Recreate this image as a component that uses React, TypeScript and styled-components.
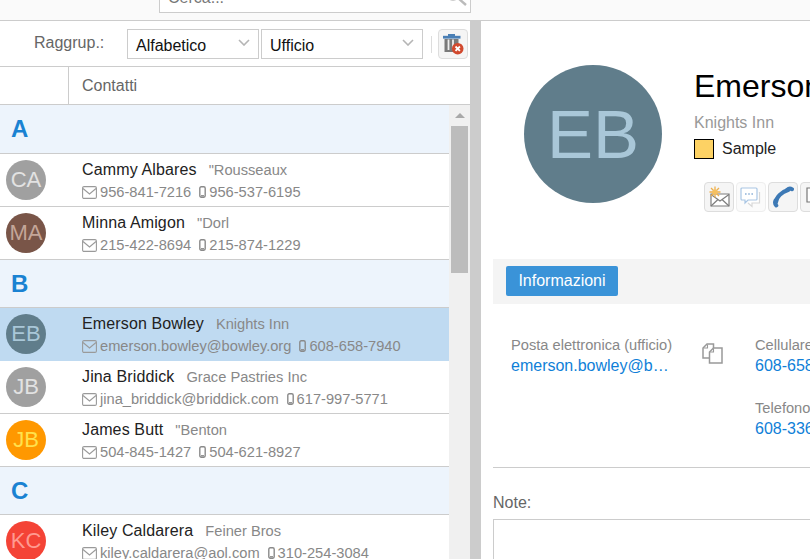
import React from "react";
import styled, { createGlobalStyle } from "styled-components";

const GlobalStyle = createGlobalStyle`
  html, body {
    margin: 0;
    height: 100%;
    overflow: hidden;
    background: #fff;
    font-family: "Liberation Sans", Arial, sans-serif;
  }
  * { box-sizing: border-box; }
`;

const Page = styled.div`
  width: 810px;
  height: 559px;
  display: flex;
  flex-direction: column;
  overflow: hidden;
`;

const TopBar = styled.div`
  height: 21px;
  flex: none;
  display: flex;
  align-items: flex-end;
  padding: 0 0 7px 159px;
  background: #fafafa;
  border-bottom: 1px solid #ccc;
  overflow: hidden;
`;

const SearchBox = styled.div`
  width: 312px;
  height: 30px;
  flex: none;
  display: flex;
  align-items: center;
  justify-content: space-between;
  padding: 0 1px 0 8px;
  background: #fff;
  border: 1px solid #ccc;
  color: #777;
  font-size: 16px;
`;

const Main = styled.div`
  flex: 1;
  min-height: 0;
  display: flex;
`;

const LeftPane = styled.div`
  width: 470px;
  flex: none;
  display: flex;
  flex-direction: column;
`;

const Splitter = styled.div`
  width: 11px;
  flex: none;
  background: #ccc;
`;

const Toolbar = styled.div`
  height: 46px;
  flex: none;
  display: flex;
  align-items: center;
  padding: 1px 2px 0 34px;
  border-bottom: 1px solid #ccc;
`;

const GroupLabel = styled.span`
  width: 93px;
  flex: none;
  color: #666;
  font-size: 16px;
  margin-top: -2px;
`;

const Select = styled.div<{ $width: number }>`
  width: ${(p) => p.$width}px;
  height: 30px;
  flex: none;
  display: flex;
  align-items: center;
  justify-content: space-between;
  margin-right: 2px;
  padding: 3px 8px 0 8px;
  border: 1px solid #ccc;
  color: #111;
  font-size: 16px;
`;

const Separator = styled.div`
  width: 1px;
  height: 17px;
  flex: none;
  margin: 0 6px;
  background: #ddd;
`;

const IconButton = styled.button<{ $faded?: boolean }>`
  width: 30px;
  height: 30px;
  flex: none;
  display: flex;
  align-items: center;
  justify-content: center;
  padding: 0;
  background: ${(p) => (p.$faded ? "#fbfbfb" : "#f5f5f5")};
  border: 1px solid ${(p) => (p.$faded ? "#eee" : "#ddd")};
  border-radius: 4px;
`;

const ColumnHeader = styled.div`
  height: 38px;
  flex: none;
  display: flex;
  border-bottom: 1px solid #ccc;
  color: #666;
  font-size: 16px;
`;

const HeaderSpacer = styled.div`
  width: 69px;
  flex: none;
  border-right: 1px solid #ccc;
`;

const HeaderTitle = styled.div`
  padding: 10px 0 0 13px;
`;

const ListArea = styled.div`
  flex: 1;
  min-height: 0;
  display: flex;
`;

const List = styled.div`
  flex: 1;
  min-width: 0;
  overflow: hidden;
`;

const Scrollbar = styled.div`
  width: 21px;
  flex: none;
  padding: 0 2px;
  background: #f0f0f0;
`;

const ScrollArrow = styled.div`
  width: 17px;
  height: 21px;
  display: flex;
  align-items: center;
  justify-content: center;

  &::before {
    content: "";
    border-left: 5px solid transparent;
    border-right: 5px solid transparent;
    border-bottom: 5px solid #a8a8a8;
  }
`;

const ScrollThumb = styled.div`
  width: 17px;
  height: 147px;
  background: #bcbcbc;
`;

const SectionHeader = styled.div<{ $tall?: boolean }>`
  height: ${(p) => (p.$tall ? 49 : 48)}px;
  display: flex;
  align-items: center;
  padding-left: 11px;
  background: #edf4fc;
  border-bottom: 1px solid #ccc;
  color: #1a82d2;
  font-size: 24px;
  font-weight: bold;
`;

const Row = styled.div<{ $selected?: boolean }>`
  height: 53px;
  display: flex;
  padding: 6px 0 0 6px;
  background: ${(p) => (p.$selected ? "#bfdaf1" : "#fff")};
  border-bottom: 1px solid ${(p) => (p.$selected ? "#bfdaf1" : "#ccc")};
`;

const Avatar = styled.div<{ $bg: string; $fg: string }>`
  width: 40px;
  height: 40px;
  flex: none;
  display: flex;
  align-items: center;
  justify-content: center;
  border-radius: 50%;
  background: ${(p) => p.$bg};
  color: ${(p) => p.$fg};
  font-size: 22px;
`;

const RowBody = styled.div`
  margin-left: 36px;
  min-width: 0;
`;

const NameLine = styled.div`
  display: flex;
  align-items: baseline;
  height: 19px;
  margin-top: 1px;
  white-space: nowrap;
`;

const Name = styled.span`
  color: #222;
  font-size: 16px;
  letter-spacing: 0.13px;
`;

const Company = styled.span`
  margin-left: 12px;
  color: #888;
  font-size: 14.67px;
`;

const DetailLine = styled.div`
  display: flex;
  align-items: center;
  height: 18px;
  margin-top: 3px;
  color: #888;
  font-size: 14.67px;
  white-space: nowrap;
`;

const Detail = styled.span`
  display: flex;
  align-items: center;
  margin-right: 8px;
  gap: 3px;
`;

const RightPane = styled.div`
  flex: 1;
  min-width: 0;
  overflow: hidden;
  padding-left: 12px;
`;

const Profile = styled.div`
  height: 238px;
  display: flex;
  padding: 44px 0 0 31px;
`;

const BigAvatar = styled(Avatar)`
  width: 138px;
  height: 138px;
  font-size: 69px;
`;

const ProfileInfo = styled.div`
  margin-left: 32px;
  width: 300px;
  flex: none;
`;

const FullName = styled.div`
  color: #000;
  font-size: 32px;
  line-height: 37px;
  margin-top: 3px;
  white-space: nowrap;
`;

const Organisation = styled.div`
  margin-top: 9px;
  color: #999;
  font-size: 16px;
  line-height: 18px;
`;

const CategoryLine = styled.div`
  display: flex;
  align-items: center;
  margin-top: 7px;
  color: #222;
  font-size: 16px;
`;

const Swatch = styled.span`
  width: 20px;
  height: 20px;
  margin-right: 8px;
  background: #fdd264;
  border: 1px solid #000;
`;

const Actions = styled.div`
  display: flex;
  gap: 2px;
  margin: 23px 0 0 10px;
`;

const TabBand = styled.div`
  height: 45px;
  display: flex;
  align-items: center;
  padding: 0 0 2px 13px;
  background: #f4f4f4;
  width: 400px;
`;

const Tab = styled.div`
  width: 112px;
  height: 30px;
  display: flex;
  align-items: center;
  justify-content: center;
  background: #3a93d8;
  border-radius: 2px;
  color: #fff;
  font-size: 16px;
`;

const Fields = styled.div`
  height: 164px;
  width: 400px;
  display: flex;
  padding: 32px 0 0 18px;
  border-bottom: 1px solid #ccc;
`;

const FieldColumn = styled.div<{ $width: number }>`
  width: ${(p) => p.$width}px;
  flex: none;
  white-space: nowrap;
`;

const Field = styled.div`
  height: 63px;
`;

const FieldLabel = styled.div`
  color: #888;
  font-size: 14.67px;
  line-height: 18px;
`;

const FieldValue = styled.div`
  margin-top: 3px;
  color: #0f7fd8;
  font-size: 16px;
  line-height: 18px;
  overflow: hidden;
  text-overflow: ellipsis;
  width: 160px;
`;

const CopySlot = styled.div`
  width: 54px;
  flex: none;
  padding: 7px 0 0 1px;
`;

const NoteLabel = styled.div`
  margin-top: 26px;
  color: #666;
  font-size: 16px;
  line-height: 18px;
`;

const NoteBox = styled.div`
  width: 400px;
  height: 80px;
  margin-top: 7px;
  background: #fff;
  border: 1px solid #ccc;
`;

const MailIcon = () => (
  <svg width="15" height="13" viewBox="0 0 15 13" fill="none" stroke="#9a9a9a" strokeWidth="1.1">
    <rect x="0.6" y="0.6" width="13.8" height="11.8" rx="1.4" />
    <path d="M1 2.500l6.500 5.500 6.500-5.500" />
  </svg>
);

const PhoneIcon = () => (
  <svg width="7" height="12" viewBox="0 0 7 12" fill="none" stroke="#8a8a8a" strokeWidth="1.4">
    <rect x="0.8" y="0.8" width="5.400" height="10.400" rx="1.400" />
    <path d="M2 9.800h3" />
  </svg>
);

const Chevron = () => (
  <svg width="12" height="7" viewBox="0 0 12 7" fill="none" stroke="#b5b5b5" strokeWidth="1.6" style={{ marginTop: -6 }}>
    <path d="M1 1l5 5 5-5" />
  </svg>
);

const SearchIcon = () => (
  <svg width="26" height="26" viewBox="0 0 26 26" fill="none" stroke="#bbb">
    <circle cx="10" cy="8" r="7" strokeWidth="1.4" />
    <path d="M15 13l8 7" strokeWidth="2.4" />
  </svg>
);

const ClearGroupIcon = () => (
  <svg width="22" height="22" viewBox="0 0 22 22">
    <rect x="1" y="2.800" width="17.500" height="2.800" fill="#4a7fb5" />
    <rect x="6" y="1" width="7" height="2" fill="#4a7fb5" />
    <path d="M2.500 6h14v13h-14z" fill="#7a7a7a" />
    <path d="M6.500 6.500v10.500M11 6.500v10.500" stroke="#eee" strokeWidth="1.800" />
    <circle cx="15.700" cy="15.700" r="5.800" fill="#d1492e" />
    <path d="M13.500 13.500l4.400 4.400M17.900 13.500l-4.400 4.400" stroke="#fff" strokeWidth="1.800" />
  </svg>
);

const NewMailIcon = () => (
  <svg width="22" height="22" viewBox="0 0 22 22">
    <path d="M3 8h18v12H3z" fill="#fff" stroke="#7d7d7d" strokeWidth="1.200" />
    <path d="M3 20l7-6.500M21 20l-7-6.500M3 8.500l9 6.500 9-6.500" fill="none" stroke="#7d7d7d" strokeWidth="1.200" />
    <path d="M7 0.500v11M1.500 6h11M3 2l8 8M11 2l-8 8" stroke="#eeb04c" strokeWidth="1.300" />
    <circle cx="7" cy="6" r="2.600" fill="#f5c060" />
  </svg>
);

const ChatIcon = () => (
  <svg width="22" height="22" viewBox="0 0 22 22" fill="none">
    <path d="M8 17l4 3.500v-3.500h7.500V6" stroke="#d8d8d8" strokeWidth="1.200" fill="#fff" />
    <path d="M2 2h14a1 1 0 0 1 1 1v10a1 1 0 0 1-1 1H8l-3 3v-3H2a1 1 0 0 1-1-1V3a1 1 0 0 1 1-1z" fill="#fff" stroke="#a9c6e4" strokeWidth="1.200" />
    <path d="M5 8h1.600M8.200 8h1.600M11.400 8H13" stroke="#8fb3d9" strokeWidth="1.600" />
  </svg>
);

const CallIcon = () => (
  <svg width="22" height="22" viewBox="0 0 22 22" fill="none" stroke="#3d79b5" strokeLinecap="round">
    <path d="M4 16C4.500 11 9.500 6 16 4" strokeWidth="4.200" />
    <path d="M15 4c1.500-1.400 3.500-1.600 5-.8" strokeWidth="4" />
    <path d="M3.500 14.500c-.8 2-.5 3.800.8 5" strokeWidth="4" />
  </svg>
);

const NoteIcon = () => (
  <svg width="22" height="22" viewBox="0 0 22 22" fill="none" stroke="#777" strokeWidth="1.200">
    <path d="M3 2h16v14h-9l-3 4v-4H3z" fill="#fff" />
  </svg>
);

const CopyIcon = () => (
  <svg width="21" height="21" viewBox="0 0 21 21" fill="none" stroke="#999" strokeWidth="1.500">
    <path d="M7 15H1V5l4-4h6.500v4" />
    <path d="M5.500 1.500V5H1.500" strokeWidth="1.100" />
    <path d="M11.500 5H20v15H7.500V9z" fill="#fff" />
    <path d="M11.500 5.500V9H8" strokeWidth="1.100" />
  </svg>
);

type Contact = {
  initials: string;
  bg: string;
  fg: string;
  name: string;
  company: string;
  first: string;
  phone: string;
  selected?: boolean;
};

const groups: { letter: string; tall?: boolean; contacts: Contact[] }[] = [
  {
    letter: "A",
    tall: true,
    contacts: [
      { initials: "CA", bg: "#a0a0a0", fg: "#e2e2e2", name: "Cammy Albares", company: '"Rousseaux', first: "956-841-7216", phone: "956-537-6195" },
      { initials: "MA", bg: "#795548", fg: "#c4a699", name: "Minna Amigon", company: '"Dorl', first: "215-422-8694", phone: "215-874-1229" },
    ],
  },
  {
    letter: "B",
    contacts: [
      { initials: "EB", bg: "#607d8b", fg: "#a9c7d8", name: "Emerson Bowley", company: "Knights Inn", first: "emerson.bowley@bowley.org", phone: "608-658-7940", selected: true },
      { initials: "JB", bg: "#a0a0a0", fg: "#e2e2e2", name: "Jina Briddick", company: "Grace Pastries Inc", first: "jina_briddick@briddick.com", phone: "617-997-5771" },
      { initials: "JB", bg: "#ff9800", fg: "#ffe14d", name: "James Butt", company: '"Benton', first: "504-845-1427", phone: "504-621-8927" },
    ],
  },
  {
    letter: "C",
    contacts: [
      { initials: "KC", bg: "#f44336", fg: "#ff9a90", name: "Kiley Caldarera", company: "Feiner Bros", first: "kiley.caldarera@aol.com", phone: "310-254-3084" },
    ],
  },
];

const ContactRow = ({ contact }: { contact: Contact }) => (
  <Row $selected={contact.selected}>
    <Avatar $bg={contact.bg} $fg={contact.fg}>{contact.initials}</Avatar>
    <RowBody>
      <NameLine>
        <Name>{contact.name}</Name>
        <Company>{contact.company}</Company>
      </NameLine>
      <DetailLine>
        <Detail><MailIcon />{contact.first}</Detail>
        <Detail><PhoneIcon />{contact.phone}</Detail>
      </DetailLine>
    </RowBody>
  </Row>
);

export default function App() {
  return (
    <Page>
      <GlobalStyle />
      <TopBar>
        <SearchBox>
          Cerca...
          <SearchIcon />
        </SearchBox>
      </TopBar>
      <Main>
        <LeftPane>
          <Toolbar>
            <GroupLabel>Raggrup.:</GroupLabel>
            <Select $width={132}>Alfabetico<Chevron /></Select>
            <Select $width={162}>Ufficio<Chevron /></Select>
            <Separator />
            <IconButton><ClearGroupIcon /></IconButton>
          </Toolbar>
          <ColumnHeader>
            <HeaderSpacer />
            <HeaderTitle>Contatti</HeaderTitle>
          </ColumnHeader>
          <ListArea>
            <List>
              {groups.map((group) => (
                <div key={group.letter}>
                  <SectionHeader $tall={group.tall}>{group.letter}</SectionHeader>
                  {group.contacts.map((contact) => (
                    <ContactRow key={contact.name} contact={contact} />
                  ))}
                </div>
              ))}
            </List>
            <Scrollbar>
              <ScrollArrow />
              <ScrollThumb />
            </Scrollbar>
          </ListArea>
        </LeftPane>
        <Splitter />
        <RightPane>
          <Profile>
            <BigAvatar $bg="#607d8b" $fg="#a9c7d8">EB</BigAvatar>
            <ProfileInfo>
              <FullName>Emerson Bowley</FullName>
              <Organisation>Knights Inn</Organisation>
              <CategoryLine><Swatch />Sample</CategoryLine>
              <Actions>
                <IconButton><NewMailIcon /></IconButton>
                <IconButton $faded><ChatIcon /></IconButton>
                <IconButton><CallIcon /></IconButton>
                <IconButton><NoteIcon /></IconButton>
              </Actions>
            </ProfileInfo>
          </Profile>
          <TabBand>
            <Tab>Informazioni</Tab>
          </TabBand>
          <Fields>
            <FieldColumn $width={190}>
              <FieldLabel>Posta elettronica (ufficio)</FieldLabel>
              <FieldValue>emerson.bowley@bowley.org</FieldValue>
            </FieldColumn>
            <CopySlot><CopyIcon /></CopySlot>
            <FieldColumn $width={120}>
              <Field>
                <FieldLabel>Cellulare</FieldLabel>
                <FieldValue>608-658-7940</FieldValue>
              </Field>
              <Field>
                <FieldLabel>Telefono</FieldLabel>
                <FieldValue>608-336-7444</FieldValue>
              </Field>
            </FieldColumn>
          </Fields>
          <NoteLabel>Note:</NoteLabel>
          <NoteBox />
        </RightPane>
      </Main>
    </Page>
  );
}
